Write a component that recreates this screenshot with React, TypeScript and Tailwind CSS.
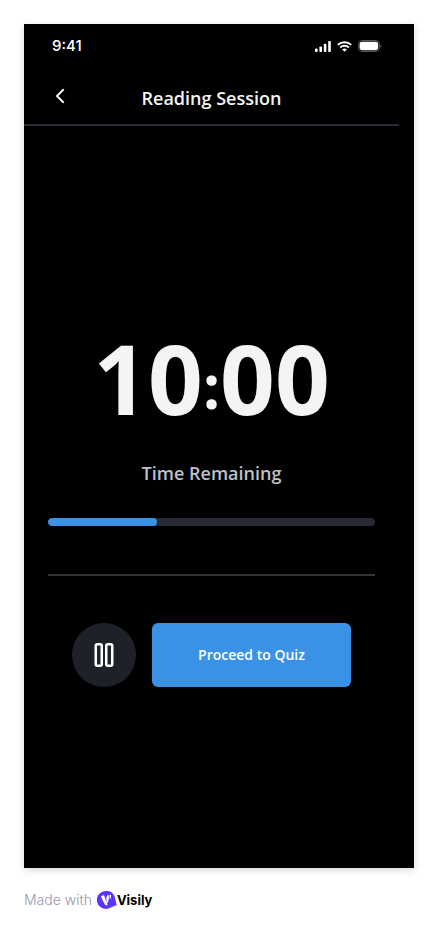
import React from "react";

function StatusBar() {
  return (
    <div className="flex h-11 items-center justify-between pr-8 pl-7 text-white">
      <span className="font-['Inter',sans-serif] text-[15px] font-medium">9:41</span>
      <div className="flex items-center gap-[6px]">
        <svg width="16" height="11" viewBox="0 0 16 11" fill="currentColor" aria-hidden="true">
          <rect x="0" y="7.5" width="2.6" height="3.5" rx="0.8" />
          <rect x="4.4" y="5.5" width="2.6" height="5.5" rx="0.8" />
          <rect x="8.8" y="2.8" width="2.6" height="8.2" rx="0.8" />
          <rect x="13.2" y="0" width="2.6" height="11" rx="0.8" />
        </svg>
        <svg width="15" height="11" viewBox="0 0 15 11" fill="none" stroke="currentColor" aria-hidden="true">
          <path d="M0.8 3.9a9.7 9.7 0 0 1 13.4 0" strokeWidth="2" />
          <path d="M3.2 6.5a6.2 6.2 0 0 1 8.6 0" strokeWidth="1.9" />
          <path d="M7.5 10.8 5.2 8.5a3.4 3.4 0 0 1 4.6 0Z" fill="currentColor" stroke="none" />
        </svg>
        <svg width="24" height="12" viewBox="0 0 24 12" aria-hidden="true">
          <rect x="0.5" y="0.5" width="21" height="11" rx="3.8" fill="none" stroke="#595959" />
          <rect x="1.6" y="1.8" width="18.6" height="8.4" rx="2.4" fill="currentColor" />
          <path d="M22.5 4.2c1.4.5 1.4 3.1 0 3.6Z" fill="#595959" />
        </svg>
      </div>
    </div>
  );
}

function Header() {
  return (
    <header className="flex h-[58px] items-center border-b-2 border-[#262a35] px-6">
      <button type="button" aria-label="Back" className="flex size-6 items-center justify-center text-[#f3f4f6]">
        <svg width="24" height="24" viewBox="0 0 24 24" fill="none" stroke="currentColor" strokeWidth="2" strokeLinecap="square" aria-hidden="true">
          <path d="M15 6 9 12l6 6" />
        </svg>
      </button>
      <h1 className="grow pt-1 pr-6 text-center text-lg font-semibold text-[#f3f4f6]">Reading Session</h1>
    </header>
  );
}

function VisilyLogo() {
  return (
    <svg width="20" height="20" viewBox="0 0 20 20" aria-hidden="true">
      <path d="M9 1A9 9 0 1 0 11.5 18.6L19.7 15 17.6 6.2A9 9 0 0 0 9 1Z" fill="#5b34ff" />
      <path d="M3.8 6.2 7 5l3.6 10.6L8 14.8Z" fill="#fff" />
      <path d="M9.4 15.4V8.4c0-2 .8-3.2 2.4-3.6v5Z" fill="#fff" />
      <path d="M12.6 4.6 14 4.9v3l-1.4.9Z" fill="#fff" />
    </svg>
  );
}

export default function App() {
  return (
    <div className="min-h-screen bg-white p-6 font-['Open_Sans',sans-serif]">
      <div className="min-h-[844px] bg-black pr-[15px] shadow-[0_2px_8px_rgba(0,0,0,0.16)]">
        <div className="-mr-[15px]">
          <StatusBar />
        </div>
        <Header />
        <main className="px-6 pt-[200px]">
          <div role="timer" className="flex items-center justify-center text-[96px] leading-[104px] font-bold text-[#f3f4f6]">
            <span>10</span>
            <span className="pt-4 text-[60px] leading-none">:</span>
            <span>00</span>
          </div>
          <p id="remaining" className="mt-[29px] text-center text-lg leading-7 font-semibold text-[#bdc1ca]">Time Remaining</p>
          <div role="progressbar" aria-labelledby="remaining" aria-valuenow={33} className="mt-[31px] h-2 overflow-hidden rounded bg-[#262a33]">
            <div className="h-full w-1/3 rounded bg-[#3992e6]" />
          </div>
          <hr className="mt-12 border-t-2 border-[#333333]" />
          <div className="mt-[47px] flex gap-4 px-6">
            <button type="button" aria-label="Pause" className="flex size-16 shrink-0 items-center justify-center rounded-full bg-[#1e2128] text-white">
              <svg width="20" height="24" viewBox="0 0 20 24" fill="none" stroke="currentColor" strokeWidth="2.5" aria-hidden="true">
                <rect x="1.75" y="1.25" width="6" height="21.5" rx="1.5" />
                <rect x="12.25" y="1.25" width="6" height="21.5" rx="1.5" />
              </svg>
            </button>
            <button type="button" className="h-16 grow rounded-md bg-[#3992e6] text-sm font-semibold text-white">
              Proceed to Quiz
            </button>
          </div>
        </main>
      </div>
      <footer className="mt-[22px] flex items-center font-['Inter',sans-serif] text-sm text-[#9a95b0]">
        <span className="mr-[5px] font-light">Made with</span>
        <VisilyLogo />
        <span className="text-[13px] font-bold text-black">Visily</span>
      </footer>
    </div>
  );
}
